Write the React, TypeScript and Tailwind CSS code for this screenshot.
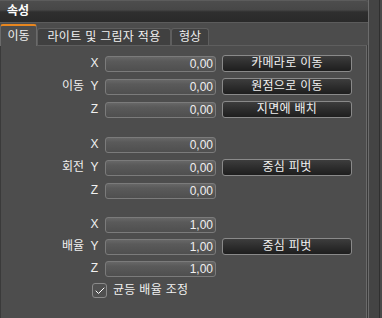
import { Check } from 'lucide-react'

const font = "font-['Liberation_Sans','Noto_Sans_CJK_KR',sans-serif]"

interface RowProps {
  group?: string
  axis: string
  value: string
  button?: string
}

function Row({ group, axis, value, button }: RowProps) {
  return (
    <div className="flex h-[17px] items-start">
      <div className="w-[83px] text-right leading-[17px]">{group}</div>
      <div className="w-[21px] text-center leading-[17px]">{axis}</div>
      <div className="mt-[1px] h-[16px] w-[111px] rounded-[3px] border border-[#7b7b7b] bg-[linear-gradient(to_bottom,#676767,#5a5a5a_30%,#4f4f4f)] pr-[2px] text-right leading-[14px]">
        {value}
      </div>
      {button && (
        <button className="ml-[6px] h-[17px] w-[130px] rounded-[3px] border border-[#8a8a8a] bg-[linear-gradient(to_bottom,#3d3d3d,#2d2d2d_50%,#1e1e1e)] text-center leading-[15px] tracking-[0.3px] text-[#f2f2f2]">
          {button}
        </button>
      )}
    </div>
  )
}

export default function App() {
  return (
    <div className={`flex h-[318px] w-[382px] overflow-hidden bg-[#4c4c4c] text-[12px] text-[#f0f0f0] ${font}`}>
      <div className="flex w-[369px] flex-col border-r border-[#6c6c6c]">
        {/* header */}
        <div className="h-[23px] rounded-tr-[3px] border-t border-b border-[#5c5c5c] bg-[linear-gradient(to_bottom,#4d4d4d_0%,#474747_42%,#2f2f2f_52%,#2a2a2a_100%)] pl-[7px] text-[12px] font-bold leading-[21px] text-white">
          속성
        </div>

        {/* tabs */}
        <div className="mt-[1px] flex h-[21px] items-end">
          <div className="relative z-10 mb-[-1px] h-[22px] w-[37px] rounded-t-[3px] border-x border-t-2 border-x-[#6a6a6a] border-t-[#e8861e] bg-[#4d4d4d] text-center leading-[20px]">
            이동
          </div>
          <div className="h-[17px] w-[134px] rounded-t-[3px] border-x border-t border-[#5e5e5e] bg-[#404040] text-center leading-[17px] tracking-[0.3px]">
            라이트 및 그림자 적용
          </div>
          <div className="h-[17px] w-[38px] rounded-t-[3px] border-x border-t border-[#5e5e5e] bg-[#404040] text-center leading-[17px]">
            형상
          </div>
        </div>

        {/* content */}
        <div className="flex flex-1">
          <div className="flex flex-1 flex-col border-t border-l border-r border-t-[#5e5e5e] border-l-[#3a3a3a] border-r-[#6a6a6a] bg-[#4d4d4d] pt-[9px]">
            <div className="flex flex-col gap-[6px]">
              <Row axis="X" value="0,00" button="카메라로 이동" />
              <Row group="이동" axis="Y" value="0,00" button="원점으로 이동" />
              <Row axis="Z" value="0,00" button="지면에 배치" />
            </div>
            <div className="mt-[18px] flex flex-col gap-[6px]">
              <Row axis="X" value="0,00" />
              <Row group="회전" axis="Y" value="0,00" button="중심 피벗" />
              <Row axis="Z" value="0,00" />
            </div>
            <div className="mt-[17px] flex flex-col gap-[5px]">
              <Row axis="X" value="1,00" />
              <Row group="배율" axis="Y" value="1,00" button="중심 피벗" />
              <Row axis="Z" value="1,00" />
            </div>
            <div className="mt-[6px] flex items-center gap-[6px] pl-[91px]">
              <div className="flex h-[15px] w-[15px] items-center justify-center rounded-[3px] border border-[#8a8a8a] bg-[#505050]">
                <Check size={12} strokeWidth={2} className="text-white" />
              </div>
              <span className="leading-[15px] tracking-[0.3px]">균등 배율 조정</span>
            </div>
          </div>
          <div className="w-[1px] bg-[#3a3a3a]" />
        </div>
      </div>

      {/* side strip */}
      <div className="flex flex-1">
        <div className="w-[10px] bg-[#444444]" />
        <div className="w-[1px] bg-[#2f2f2f]" />
        <div className="flex-1 bg-[#4a4a4a]" />
      </div>
    </div>
  )
}
